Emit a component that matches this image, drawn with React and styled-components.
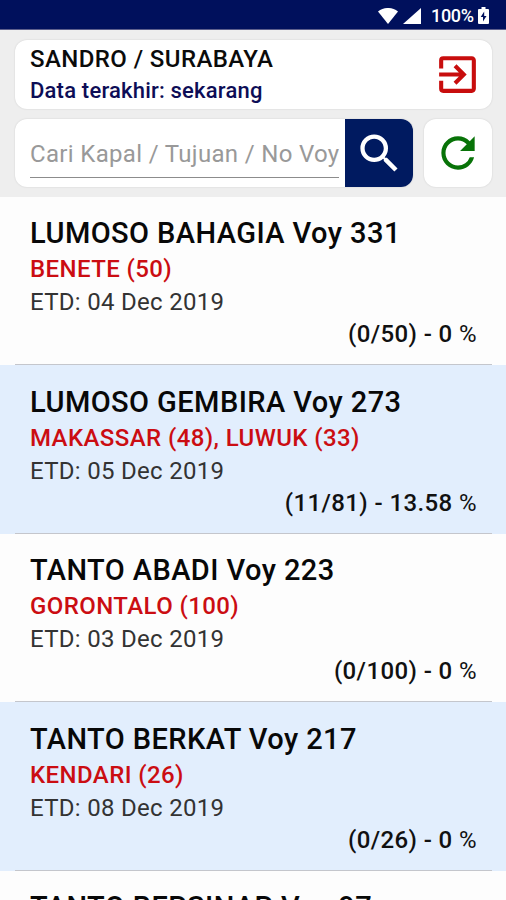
import React from "react";
import styled, { createGlobalStyle } from "styled-components";
import { MdExitToApp, MdSearch, MdRefresh } from "react-icons/md";

const GlobalStyle = createGlobalStyle`
  * { box-sizing: border-box; }
  body { margin: 0; background: #fdfdfd; font-family: Roboto, sans-serif; overflow: hidden; }
`;

const Screen = styled.div`
  width: 506px;
  height: 900px;
  overflow: hidden;
  display: flex;
  flex-direction: column;
  background: #fdfdfd;
`;

const StatusBar = styled.div`
  height: 30px;
  flex: none;
  display: flex;
  align-items: center;
  justify-content: flex-end;
  padding: 2px 17px 0 0;
  background: #00105c;
  border-bottom: 1px solid #5d5f8c;
  color: #fff;
  font-size: 18px;
  font-weight: 500;
  svg { display: block; fill: #fff; }
`;

const Percent = styled.span`
  margin: 0 5px 0 10px;
  width: 42px;
  line-height: 27px;
  letter-spacing: -0.3px;
  white-space: nowrap;
`;

const Signal = styled.svg`
  margin-left: 5px;
`;

const Header = styled.header`
  height: 167px;
  flex: none;
  display: flex;
  flex-direction: column;
  gap: 10px;
  padding: 10px 14px 0 15px;
  background: #eeeeee;
`;

const Card = styled.div`
  background: #fff;
  border-radius: 12px;
  box-shadow: 0 0 2px rgba(0, 0, 0, 0.14);
`;

const UserCard = styled(Card)`
  height: 69px;
  display: flex;
  align-items: center;
  justify-content: space-between;
  padding: 0 10px 0 15px;
`;

const UserName = styled.div`
  padding-top: 1px;
  font-size: 24px;
  font-weight: 500;
  line-height: 31px;
  letter-spacing: 0.42px;
  color: #0b0b0b;
`;

const LastUpdate = styled.div`
  font-size: 22px;
  font-weight: 500;
  line-height: 31px;
  letter-spacing: 0.2px;
  color: #0d0d56;
`;

const SearchRow = styled.div`
  display: flex;
  gap: 11px;
  height: 68px;
`;

const SearchBox = styled(Card)`
  width: 398px;
  display: flex;
  overflow: hidden;
`;

const SearchInput = styled.input`
  width: 309px;
  height: 45px;
  margin: 14px 6px 0 15px;
  padding: 0 0 2px;
  border: 0;
  border-bottom: 1px solid #8c8c8c;
  border-radius: 0;
  outline: 0;
  background: transparent;
  font: 400 24px Roboto, sans-serif;
  letter-spacing: 0.33px;
  &::placeholder { color: #999; opacity: 1; }
`;

const SearchButton = styled.button`
  flex: 1;
  border: 0;
  padding: 0;
  display: flex;
  align-items: center;
  justify-content: center;
  background: #001a60;
  color: #fff;
`;

const RefreshButton = styled(Card).attrs({ as: "button" })`
  width: 68px;
  border: 0;
  padding: 0;
  display: flex;
  align-items: center;
  justify-content: center;
  color: #087308;
`;

const Voyage = styled.article`
  height: 168.4px;
  flex: none;
  display: flex;
  flex-direction: column;
  padding: 17px 14px 0 15px;
  background: ${(p) => (p.$tinted ? "#e2eefd" : "#fdfdfd")};
`;

const VoyageBody = styled.div`
  flex: 1;
  padding: 0 15px;
  border-bottom: 1px solid #c4c6cc;
`;

const Title = styled.h2`
  margin: 0;
  padding-top: 0.4px;
  font-size: 29px;
  font-weight: 500;
  line-height: 38px;
  letter-spacing: 0.43px;
  color: #080808;
  white-space: nowrap;
`;

const Ports = styled.div`
  font-size: 24px;
  font-weight: 500;
  line-height: 34px;
  letter-spacing: 0.41px;
  color: #cb0d12;
`;

const Etd = styled.div`
  font-size: 24px;
  line-height: 32px;
  letter-spacing: 0.3px;
  color: #333;
`;

const Progress = styled.div`
  font-size: 24px;
  font-weight: 500;
  line-height: 33px;
  letter-spacing: 0.4px;
  text-align: right;
  color: #111;
`;

const PercentSign = styled.span`
  font-weight: 400;
`;

const voyages = [
  { name: "LUMOSO BAHAGIA Voy 331", ports: "BENETE (50)", etd: "04 Dec 2019", progress: "(0/50) - 0" },
  { name: "LUMOSO GEMBIRA Voy 273", ports: "MAKASSAR (48), LUWUK (33)", etd: "05 Dec 2019", progress: "(11/81) - 13.58" },
  { name: "TANTO ABADI Voy 223", ports: "GORONTALO (100)", etd: "03 Dec 2019", progress: "(0/100) - 0" },
  { name: "TANTO BERKAT Voy 217", ports: "KENDARI (26)", etd: "08 Dec 2019", progress: "(0/26) - 0" },
  { name: "TANTO BERSINAR Voy 97" },
];

export default function App() {
  return (
    <>
      <GlobalStyle />
      <Screen>
        <StatusBar>
          <svg width="20" height="16" viewBox="0 0 20 16"><path d="M10 16 0 3.500C6-1.200 14-1.200 20 3.500Z" /></svg>
          <Signal width="18" height="16" viewBox="0 0 18 16"><path d="M18 0v16H0Z" /></Signal>
          <Percent>100%</Percent>
          <svg width="11" height="17" viewBox="0 0 11 17">
            <path fillRule="evenodd" d="M3.500 0h4v2H10q1 0 1 1v13q0 1-1 1H1q-1 0-1-1V3q0-1 1-1h2.500ZM6.200 4.500 2.700 10h2.300v4.500L8.500 9H6.200Z" />
          </svg>
        </StatusBar>
        <Header>
          <UserCard>
            <div>
              <UserName>SANDRO / SURABAYA</UserName>
              <LastUpdate>Data terakhir: sekarang</LastUpdate>
            </div>
            <MdExitToApp size={49} color="#c80d0d" />
          </UserCard>
          <SearchRow>
            <SearchBox>
              <SearchInput placeholder="Cari Kapal / Tujuan / No Voy" />
              <SearchButton aria-label="Cari"><MdSearch size={51} /></SearchButton>
            </SearchBox>
            <RefreshButton aria-label="Muat ulang"><MdRefresh size={50} /></RefreshButton>
          </SearchRow>
        </Header>
        {voyages.map((v, i) => (
          <Voyage key={v.name} $tinted={i % 2 === 1}>
            <VoyageBody>
              <Title>{v.name}</Title>
              {v.ports && (
                <>
                  <Ports>{v.ports}</Ports>
                  <Etd>ETD: {v.etd}</Etd>
                  <Progress>{v.progress} <PercentSign>%</PercentSign></Progress>
                </>
              )}
            </VoyageBody>
          </Voyage>
        ))}
      </Screen>
    </>
  );
}
